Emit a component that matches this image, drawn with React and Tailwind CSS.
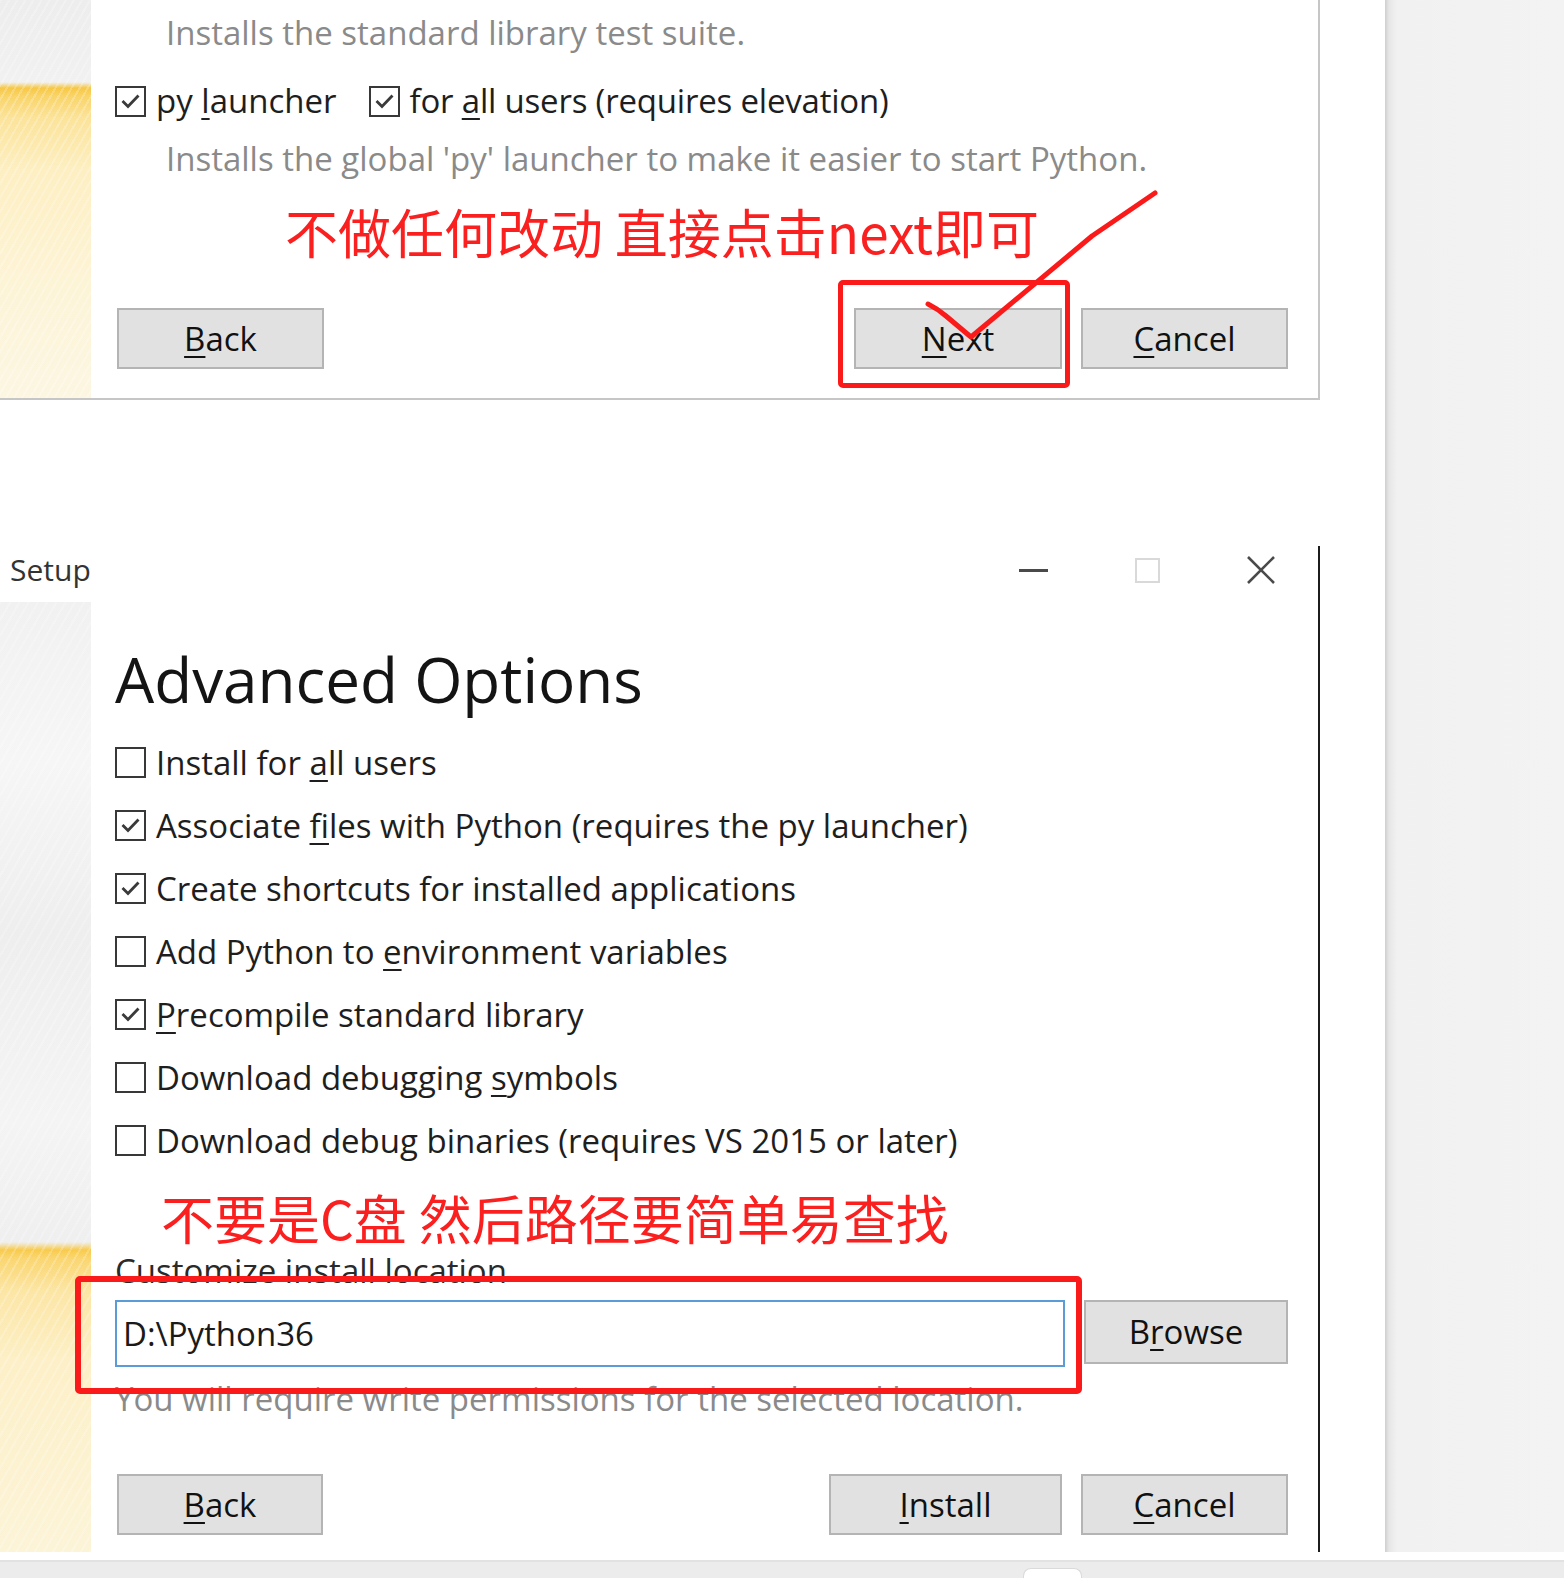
import React from 'react';

const ui = "font-['Open_Sans','Noto_Sans',sans-serif]";
const cjk = "font-['Noto_Sans_CJK_SC','Noto_Sans_CJK_JP',sans-serif]";

const options = [
  { on: false, parts: ['Install for ', 'a', 'll users'] },
  { on: true, parts: ['Associate ', 'f', 'iles with Python (requires the py launcher)'] },
  { on: true, parts: ['Create shortcuts for installed applications', '', ''] },
  { on: false, parts: ['Add Python to ', 'e', 'nvironment variables'] },
  { on: true, parts: ['', 'P', 'recompile standard library'] },
  { on: false, parts: ['Download debugging ', 's', 'ymbols'] },
  { on: false, parts: ['Download debu', 'g', ' binaries (requires VS 2015 or later)'] },
];

function Key({ children }) {
  return <span className="underline decoration-2 underline-offset-[5px]">{children}</span>;
}

function Label({ parts }) {
  const [before, key, after] = parts;
  return (
    <span className="whitespace-nowrap">
      {before}
      {key && <Key>{key}</Key>}
      {after}
    </span>
  );
}

function Box({ on }) {
  return (
    <span className="flex h-[31px] w-[31px] shrink-0 items-center justify-center border-[2.5px] border-[#383838] bg-white">
      {on && (
        <svg width="23" height="23" viewBox="0 0 23 23" fill="none">
          <path d="M3.5 11 L9 16.5 L19.5 5.5" stroke="#3a3a3a" strokeWidth="2.8" strokeLinejoin="miter" />
        </svg>
      )}
    </span>
  );
}

function Button({ w, h = 'h-[61px]', parts }) {
  return (
    <div className={`flex ${w} ${h} items-center justify-center border-2 border-[#b4b4b4] bg-[#e1e1e1] text-[33px] text-[#111]`}>
      <Label parts={parts} />
    </div>
  );
}

function TopDialog() {
  return (
    <div className="relative flex h-[400px] w-[1320px] shrink-0 border-r-2 border-b-2 border-[#c6c6c6] bg-white">
      <div className="w-[91px] shrink-0 bg-[repeating-linear-gradient(120deg,rgba(255,255,255,0.22)_0px,rgba(255,255,255,0.22)_2px,transparent_2px,transparent_7px),linear-gradient(180deg,#ededed_0px,#f1f1f1_82px,#f7c845_88px,#f9d468_96px,#fbe39a_118px,#fdefc2_170px,#fdf4d6_280px,#fcf6e2_400px)]" />
      <div className="flex flex-1 flex-col pl-[24px] pr-[30px] text-[33px]">
        <p className="mt-[11px] h-[44px] pl-[51px] leading-[44px] whitespace-nowrap text-[#8a8a8a]">
          Installs the standard library test suite.
        </p>
        <div className="mt-[24px] flex h-[44px] items-center text-[#1e1e1e]">
          <Box on />
          <span className="ml-[10px]">
            <Label parts={['py ', 'l', 'auncher']} />
          </span>
          <span className="ml-[32px]">
            <Box on />
          </span>
          <span className="ml-[10px] tracking-[-0.2px]">
            <Label parts={['for ', 'a', 'll users (requires elevation)']} />
          </span>
        </div>
        <p className="mt-[14px] h-[44px] pl-[51px] leading-[44px] whitespace-nowrap text-[#8a8a8a]">
          Installs the global 'py' launcher to make it easier to start Python.
        </p>
        <p className={`${cjk} mt-[23px] ml-[170px] h-[54px] text-[53px] leading-[54px] whitespace-nowrap text-[#fb2020]`}>
          不做任何改动 直接点击next即可
        </p>
        <div className="mt-[50px] flex items-start">
          <div className="ml-[2px]">
            <Button w="w-[207px]" parts={['', 'B', 'ack']} />
          </div>
          <div className="ml-auto">
            <Button w="w-[208px]" parts={['', 'N', 'ext']} />
          </div>
          <div className="ml-[19px]">
            <Button w="w-[207px]" parts={['', 'C', 'ancel']} />
          </div>
        </div>
      </div>

      {/* annotation: red box and tick over Next */}
      <div className="pointer-events-none absolute left-[838px] top-[280px] h-[108px] w-[232px] rounded-[5px] border-[5px] border-[#fb1a1a]" />
      <svg className="pointer-events-none absolute left-0 top-0" width="1320" height="400" viewBox="0 0 1320 400" fill="none">
        <path d="M928 304 Q 938 309 946 316 L 971 337 L 1092 236 L 1155 193" stroke="#fb1a1a" strokeWidth="5" strokeLinecap="round" strokeLinejoin="round" />
      </svg>
    </div>
  );
}

function TitleBar() {
  return (
    <div className="flex h-[56px] items-start border-r-2 border-[#1c1c1c]">
      <span className="mt-[4px] ml-[10px] h-[40px] text-[30px] leading-[40px] text-[#333]">Setup</span>
      <div className="ml-auto flex">
        <div className="flex h-[48px] w-[114px] items-center justify-center">
          <div className="h-[3px] w-[29px] bg-[#4a4a4a]" />
        </div>
        <div className="flex h-[48px] w-[114px] items-center justify-center">
          <div className="h-[25px] w-[25px] border-2 border-[#d9d9d9]" />
        </div>
        <div className="flex h-[48px] w-[114px] items-center justify-center">
          <svg width="30" height="30" viewBox="0 0 30 30" fill="none">
            <path d="M2 2 L28 28 M28 2 L2 28" stroke="#4a4a4a" strokeWidth="2.6" />
          </svg>
        </div>
      </div>
    </div>
  );
}

function BottomDialog() {
  return (
    <div className="relative flex h-[1006px] w-[1320px] shrink-0 flex-col bg-white">
      <TitleBar />
      <div className="flex h-[950px] border-r-2 border-[#1c1c1c]">
        <div className="w-[91px] shrink-0 bg-[repeating-linear-gradient(120deg,rgba(255,255,255,0.2)_0px,rgba(255,255,255,0.2)_2px,transparent_2px,transparent_8px),linear-gradient(180deg,#f1f1f1_0px,#f6f6f6_160px,#eeeeee_330px,#f4f4f4_520px,#efefef_640px,#f8cb4c_648px,#fad670_656px,#fce6a6_690px,#fdf0c8_760px,#fcf4d8_950px)]" />
        <div className="flex flex-1 flex-col pl-[24px] pr-[31px] text-[33px]">
          <h1 className="mt-[37px] h-[80px] text-[62px] leading-[80px] whitespace-nowrap text-[#141414]">Advanced Options</h1>
          <div className="mt-[12px] flex flex-col">
            {options.map((o, i) => (
              <div key={i} className="flex h-[63px] items-center gap-[10px] text-[#1e1e1e]">
                <Box on={o.on} />
                <Label parts={o.parts} />
              </div>
            ))}
          </div>
          <p className={`${cjk} mt-[20px] ml-[46px] h-[50px] text-[53px] leading-[50px] whitespace-nowrap text-[#fb2020]`}>
            不要是C盘 然后路径要简单易查找
          </p>
          <p className="mt-[11px] h-[36px] leading-[36px] whitespace-nowrap text-[#2a2a2a]">Customize install location</p>
          <div className="mt-[11px] flex items-start">
            <div className="flex h-[67px] w-[950px] items-center border-2 border-[#5b9bd8] bg-white pl-[6px] text-[#1a1a1a]">
              {'D:\\Python36'}
            </div>
            <div className="ml-[19px]">
              <Button w="w-[204px]" h="h-[64px]" parts={['B', 'r', 'owse']} />
            </div>
          </div>
          <p className="mt-[12px] h-[40px] leading-[40px] whitespace-nowrap text-[#8a8a8a]">
            You will require write permissions for the selected location.
          </p>
          <div className="mt-[55px] flex items-start">
            <div className="ml-[2px]">
              <Button w="w-[206px]" parts={['', 'B', 'ack']} />
            </div>
            <div className="ml-auto">
              <Button w="w-[233px]" parts={['', 'I', 'nstall']} />
            </div>
            <div className="ml-[19px]">
              <Button w="w-[207px]" parts={['', 'C', 'ancel']} />
            </div>
          </div>
        </div>
      </div>

      {/* annotation: red box round the install path */}
      <div className="pointer-events-none absolute left-[75px] top-[730px] h-[118px] w-[1007px] rounded-[5px] border-[6px] border-[#fb1a1a]" />
    </div>
  );
}

export default function App() {
  return (
    <div className={`${ui} flex h-[1578px] w-[1564px] flex-col overflow-hidden bg-white`}>
      <div className="flex h-[1552px]">
        <div className="flex w-[1385px] shrink-0 flex-col bg-white">
          <TopDialog />
          <div className="h-[146px] shrink-0" />
          <BottomDialog />
        </div>
        <div className="flex-1 bg-[linear-gradient(90deg,#cfcfcf_0px,#e6e6e6_4px,#f1f1f1_12px,#f3f3f3_100%)]" />
      </div>
      <div className="h-[8px] bg-white" />
      <div className="flex h-[18px] items-end border-t-2 border-[#e2e2e2] bg-[#ececec]">
        <div className="ml-[1023px] h-[10px] w-[59px] rounded-t-[8px] border-x border-t border-[#dadada] bg-white" />
      </div>
    </div>
  );
}
